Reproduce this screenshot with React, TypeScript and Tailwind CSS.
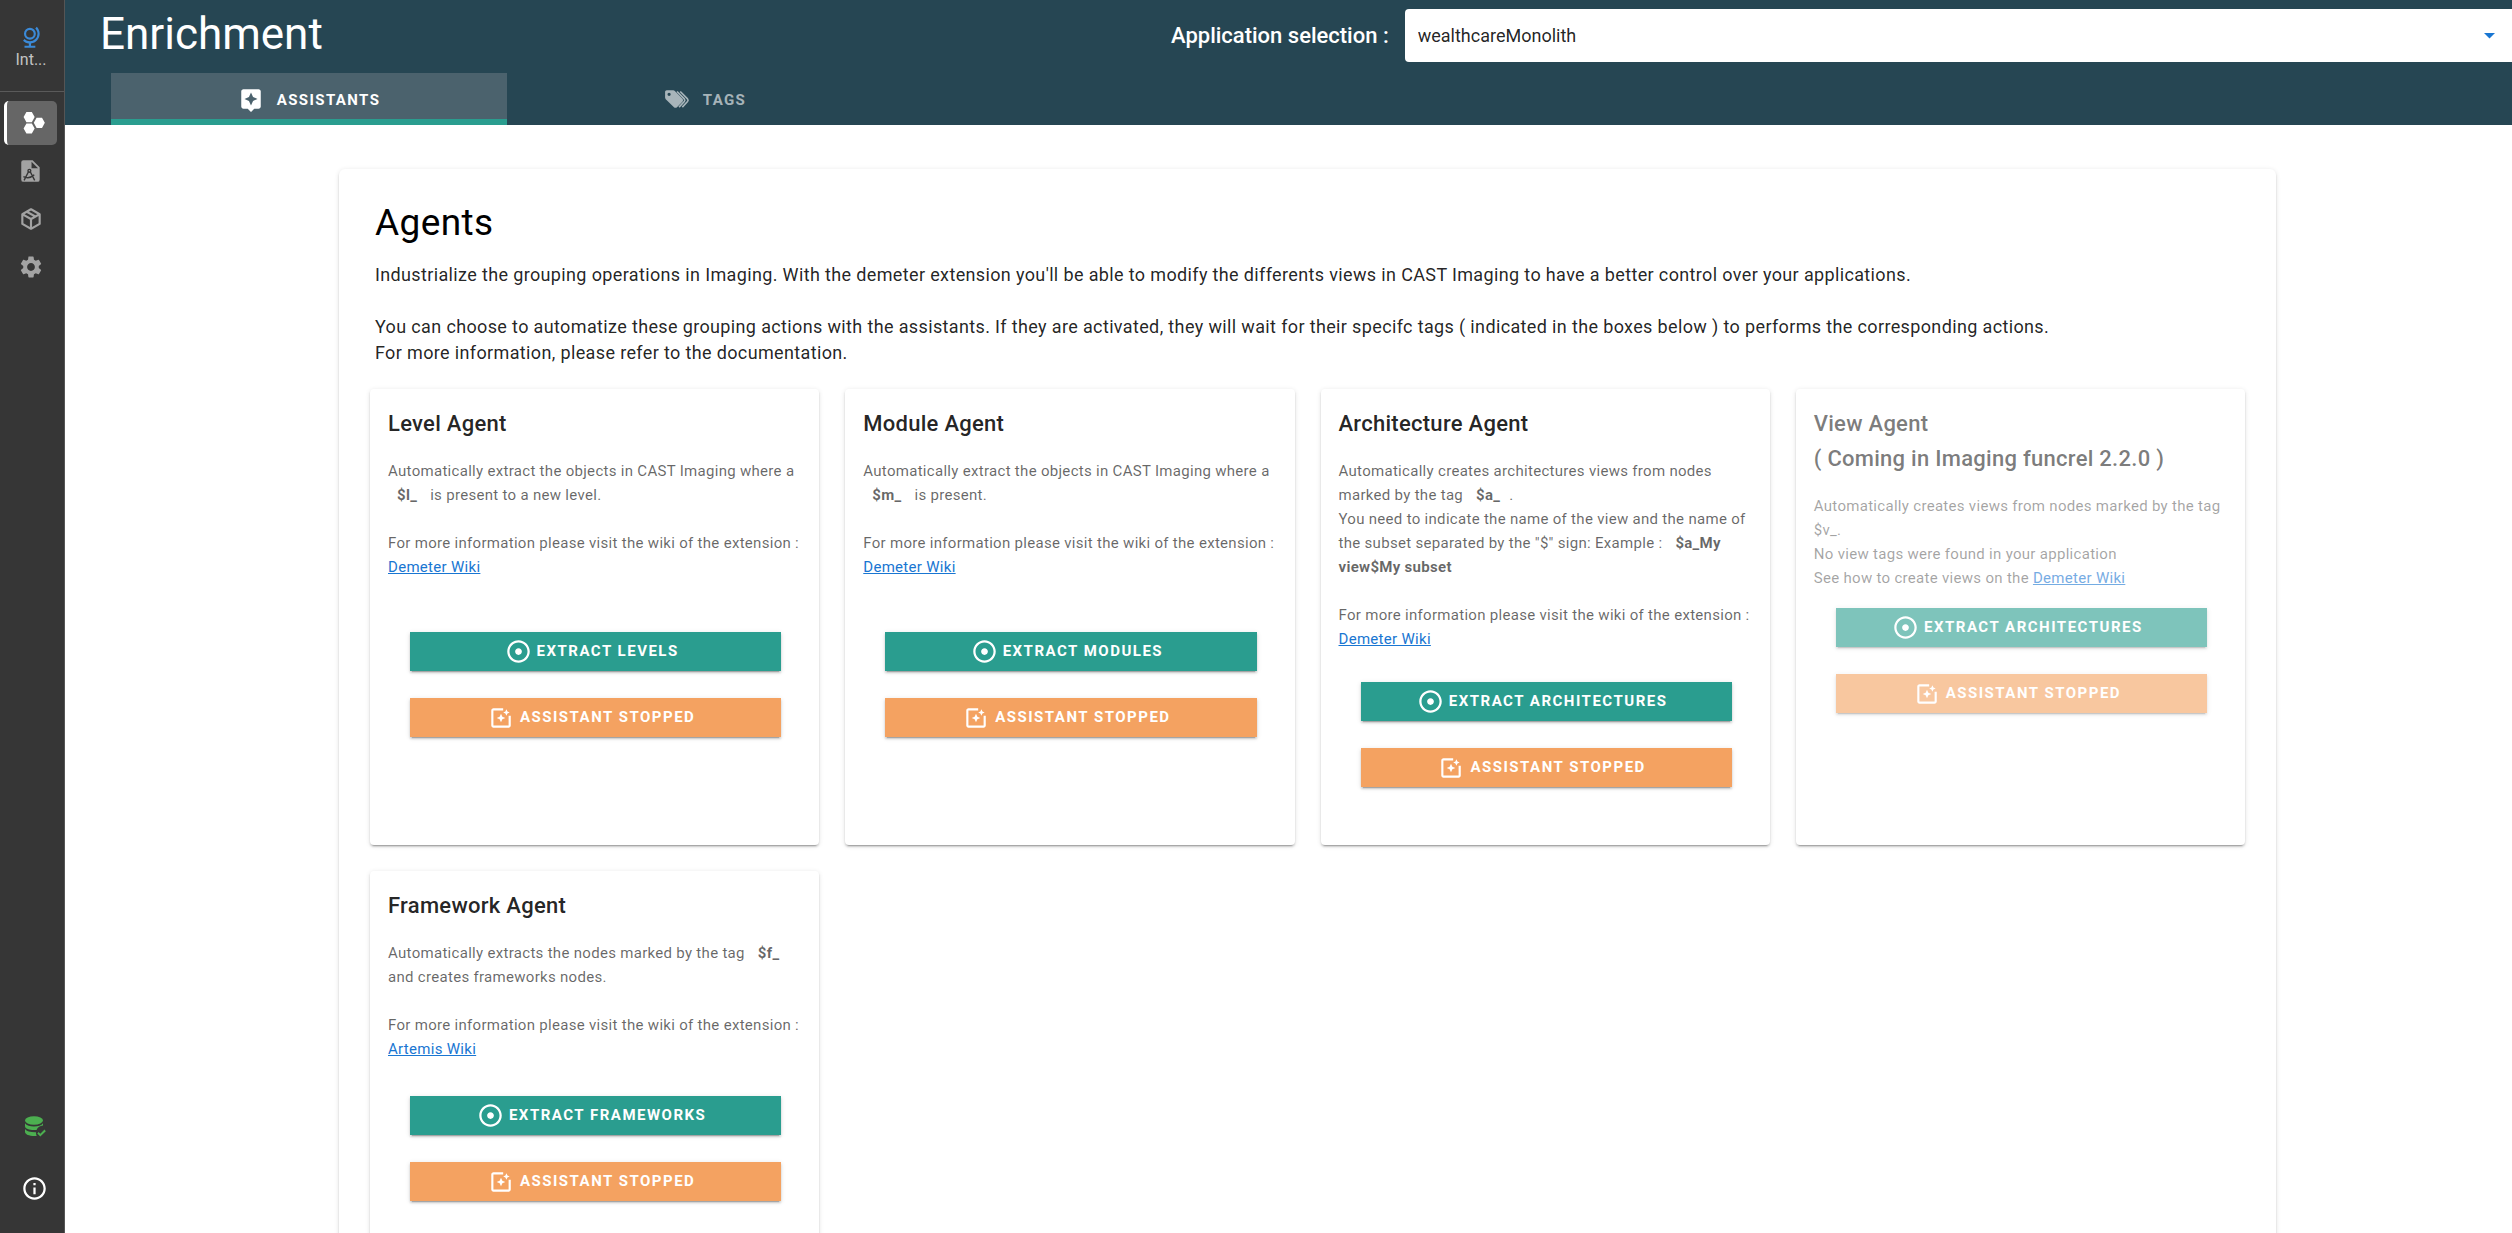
import type { ReactNode } from "react";
import { MdAdjust, MdAssistant, MdInfoOutline, MdPhotoFilter, MdSettings } from "react-icons/md";

function Svg({ children, className }: { children: ReactNode; className?: string }) {
  return (
    <svg viewBox="0 0 24 24" fill="currentColor" aria-hidden="true" className={className ?? "size-[26px]"}>
      {children}
    </svg>
  );
}

const GlobeIcon = () => (
  <Svg>
    <path d="M17.36,2.64L15.95,4.06C17.26,5.37 18,7.14 18,9A7,7 0 0,1 11,16C9.15,16 7.37,15.26 6.06,13.95L4.64,15.36C6.08,16.8 7.97,17.71 10,17.93V20H6V22H16V20H12V17.94C16.55,17.43 20,13.58 20,9C20,6.62 19.05,4.33 17.36,2.64M11,3.5A5.5,5.5 0 0,0 5.5,9A5.5,5.5 0 0,0 11,14.5A5.5,5.5 0 0,0 16.5,9A5.5,5.5 0 0,0 11,3.5M11,5.5C12.94,5.5 14.5,7.07 14.5,9A3.5,3.5 0 0,1 11,12.5A3.5,3.5 0 0,1 7.5,9A3.5,3.5 0 0,1 11,5.5Z" />
  </Svg>
);

const HexagonsIcon = () => (
  <Svg>
    <path d="M5 1.8h5l2.6 4.7L10 11.2H5L2.4 6.5zM5 12.4h5l2.6 4.7L10 21.8H5L2.4 17.1zM14.4 7.1h5L22 11.8l-2.6 4.7h-5l-2.6-4.7z" />
  </Svg>
);

const CadFileIcon = () => (
  <Svg>
    <path
      fillRule="evenodd"
      d="M5 2h8.500l6.500 6.500V20a2 2 0 0 1-2 2H5a2 2 0 0 1-2-2V4a2 2 0 0 1 2-2zM12.500 3.500V9.500H18.500z"
    />
    <g fill="none" stroke="#363636" strokeWidth="1.300">
      <path d="M9.800 12.500L5.600 20.600M11.200 12.500L15.400 20.600M5 17.200q5.500 2.600 10-1.700" />
      <circle cx="10.500" cy="11.800" r="1.300" />
    </g>
  </Svg>
);

const PackageIcon = () => (
  <Svg>
    <path d="M21,16.5C21,16.88 20.79,17.21 20.47,17.38L12.57,21.82C12.41,21.94 12.21,22 12,22C11.79,22 11.59,21.94 11.43,21.82L3.53,17.38C3.21,17.21 3,16.88 3,16.5V7.5C3,7.12 3.21,6.79 3.53,6.62L11.43,2.18C11.59,2.06 11.79,2 12,2C12.21,2 12.41,2.06 12.57,2.18L20.47,6.62C20.79,6.79 21,7.12 21,7.5V16.5M12,4.15L10.11,5.22L16,8.61L17.96,7.5L12,4.15M6.04,7.5L12,10.85L13.96,9.75L8.08,6.35L6.04,7.5M5,15.91L11,19.29V12.58L5,9.21V15.91M19,15.91V9.21L13,12.58V19.29L19,15.91Z" />
  </Svg>
);

const DatabaseCheckIcon = () => (
  <Svg className="size-[24px]">
    <ellipse cx="11" cy="5.500" rx="9" ry="4.200" />
    <path d="M2 8.200c1.500 2.400 5 3.300 9 3.300s7.500-.9 9-3.300v2.300c-2.800.3-5.600 1.900-6.500 4.400-5.300.7-11.500-.8-11.500-3.700z" />
    <path d="M2 14c1.500 2.300 5.500 3.300 11 3.200-.1 1.300.2 2.500.7 3.700C7.500 21.500 2 19.700 2 17z" />
    <path d="M17.300 21.500l-3-3.100 1.300-1.300 1.700 1.700 4.200-4.200 1.300 1.600z" />
  </Svg>
);

const TagsIcon = () => (
  <Svg>
    <path
      fillRule="evenodd"
      d="M2.500 3H8.500c.6 0 1.100.2 1.500.6l7 7.200c.8.800.8 2 0 2.800l-5 5c-.8.800-2 .8-2.800 0L1.600 11.200C1.200 10.800 1 10.200 1 9.700V4.500C1 3.700 1.700 3 2.500 3zM4.700 5.200a1.500 1.500 0 1 0 0 3 1.500 1.500 0 0 0 0-3z"
    />
    <path
      d="M12 4.200l6.700 6.800c.6.700.6 1.700 0 2.400L13.900 18.600M15 4.200l6.700 6.800c.6.700.6 1.700 0 2.400L16.900 18.600"
      fill="none"
      stroke="currentColor"
      strokeWidth="1.500"
    />
  </Svg>
);

function NavItem({ label, active, children }: { label: string; active?: boolean; children: ReactNode }) {
  return (
    <button
      type="button"
      aria-label={label}
      className={
        active
          ? "flex h-11 items-center justify-center rounded-[5px] border-l-3 border-white bg-[#666666] pl-1 text-white"
          : "flex h-11 items-center justify-center text-[#a3a3a3]"
      }
    >
      {children}
    </button>
  );
}

function Sidebar() {
  return (
    <aside className="flex w-[65px] shrink-0 flex-col border-r border-[#555555] bg-[#363636]">
      <button
        type="button"
        className="flex h-[92px] flex-col items-center border-b border-[#5a5a5a] pt-6 pr-0.5 text-[16px] leading-5 text-[#c3c3c3]"
      >
        <span className="text-[#3b8ad8]">
          <GlobeIcon />
        </span>
        <span>Int...</span>
      </button>
      <nav className="flex flex-1 flex-col gap-1 pt-[9px] pr-[7px] pl-1">
        <NavItem label="Enrichment" active>
          <HexagonsIcon />
        </NavItem>
        <NavItem label="Documents">
          <CadFileIcon />
        </NavItem>
        <NavItem label="Packages">
          <PackageIcon />
        </NavItem>
        <NavItem label="Settings">
          <MdSettings className="size-[26px]" />
        </NavItem>
      </nav>
      <div className="flex flex-col items-center gap-9 pb-[31px] pl-[5px]">
        <button type="button" aria-label="Database status" className="text-[#4caf50]">
          <DatabaseCheckIcon />
        </button>
        <button type="button" aria-label="Information" className="text-white">
          <MdInfoOutline className="size-[27px]" />
        </button>
      </div>
    </aside>
  );
}

function Header() {
  return (
    <header className="flex h-[125px] flex-col justify-between bg-[#264653] text-white">
      <div className="flex items-start">
        <h1 className="flex-1 pl-[35px] pt-[5px] text-[44px] leading-[58px]">Enrichment</h1>
        <div className="flex w-[1341px] max-w-2/3 items-center gap-4 pt-[9px]">
          <label htmlFor="application" className="shrink-0 text-[22px] font-medium">
            Application selection :
          </label>
          <div className="relative flex-1">
            <select
              id="application"
              defaultValue="wealthcareMonolith"
              className="h-[53px] w-full appearance-none rounded-l-[4px] bg-white pl-[13px] text-[18px] text-black/87"
            >
              <option>wealthcareMonolith</option>
            </select>
            <svg
              viewBox="0 0 10 5"
              aria-hidden="true"
              className="pointer-events-none absolute top-6 right-[17px] w-[11px] fill-[#1976d2]"
            >
              <path d="M0 0h10L5 5z" />
            </svg>
          </div>
        </div>
      </div>
      <div role="tablist" className="flex pl-[46px] text-[15px] font-bold tracking-[1.4px]">
        <button
          type="button"
          role="tab"
          aria-selected="true"
          className="flex h-[52px] w-[396px] items-center justify-center gap-[13px] border-b-6 border-[#2a9d8f] bg-[#4b626d] pt-2"
        >
          <MdAssistant className="size-[26px]" />
          ASSISTANTS
        </button>
        <button
          type="button"
          role="tab"
          aria-selected="false"
          className="flex h-[52px] w-[396px] items-center justify-center gap-[13px] pt-0.5 text-white/60"
        >
          <TagsIcon />
          TAGS
        </button>
      </div>
    </header>
  );
}

type Agent = {
  title: ReactNode;
  body: ReactNode;
  action: string;
  spacing: string;
  disabled?: boolean;
};

function Tag({ children }: { children: ReactNode }) {
  return <strong className="px-[9px] font-bold">{children}</strong>;
}

function WikiLink({ children }: { children: ReactNode }) {
  return (
    <a href="#wiki" className="text-[#1976d2] underline">
      {children}
    </a>
  );
}

function MoreInfo({ wiki }: { wiki: string }) {
  return (
    <>
      <br />
      <br />
      For more information please visit the wiki of the extension :
      <br />
      <WikiLink>{wiki}</WikiLink>
    </>
  );
}

const agents: Agent[] = [
  {
    title: "Level Agent",
    body: (
      <>
        Automatically extract the objects in CAST Imaging where a <Tag>$l_</Tag> is present to a new level.
        <MoreInfo wiki="Demeter Wiki" />
      </>
    ),
    action: "EXTRACT LEVELS",
    spacing: "pt-[53px]",
  },
  {
    title: "Module Agent",
    body: (
      <>
        Automatically extract the objects in CAST Imaging where a <Tag>$m_</Tag> is present.
        <MoreInfo wiki="Demeter Wiki" />
      </>
    ),
    action: "EXTRACT MODULES",
    spacing: "pt-[53px]",
  },
  {
    title: "Architecture Agent",
    body: (
      <>
        Automatically creates architectures views from nodes marked by the tag <Tag>$a_</Tag>.
        <br />
        You need to indicate the name of the view and the name of the subset separated by the "$" sign: Example :{" "}
        <Tag>$a_My view$My subset</Tag>
        <MoreInfo wiki="Demeter Wiki" />
      </>
    ),
    action: "EXTRACT ARCHITECTURES",
    spacing: "pt-[31px]",
  },
  {
    title: (
      <>
        View Agent
        <br />( Coming in Imaging funcrel 2.2.0 )
      </>
    ),
    body: (
      <>
        Automatically creates views from nodes marked by the tag $v_.
        <br />
        No view tags were found in your application
        <br />
        See how to create views on the <WikiLink>Demeter Wiki</WikiLink>
      </>
    ),
    action: "EXTRACT ARCHITECTURES",
    spacing: "pt-[18px]",
    disabled: true,
  },
  {
    title: "Framework Agent",
    body: (
      <>
        Automatically extracts the nodes marked by the tag <Tag>$f_</Tag> and creates frameworks nodes.
        <MoreInfo wiki="Artemis Wiki" />
      </>
    ),
    action: "EXTRACT FRAMEWORKS",
    spacing: "pt-[35px]",
  },
];

const buttonBase =
  "flex h-[39px] items-center justify-center pr-2 text-[15px] font-bold tracking-[1.5px] text-white shadow-[0_3px_1px_-2px_rgba(0,0,0,0.2),0_2px_2px_0_rgba(0,0,0,0.14),0_1px_5px_0_rgba(0,0,0,0.12)]";

function AgentCard({ agent }: { agent: Agent }) {
  const fade = agent.disabled ? "opacity-60" : "";
  return (
    <article className="min-h-[456px] rounded-[4px] bg-white pt-[17px] pr-4 pl-[18px] shadow-[0_3px_1px_-2px_rgba(0,0,0,0.2),0_2px_2px_0_rgba(0,0,0,0.14),0_1px_5px_0_rgba(0,0,0,0.12)]">
      <div className={fade}>
        <h3 className="text-[22px] leading-[35px] font-medium tracking-[0.0125em] text-black/87">{agent.title}</h3>
        <p className="pt-[18px] text-[15px] leading-6 tracking-[0.02em] text-black/60">{agent.body}</p>
        <div className={`flex flex-col gap-[27px] px-[22px] ${agent.spacing}`}>
          <button type="button" disabled={agent.disabled} className={`${buttonBase} gap-[5px] bg-[#2a9d8f]`}>
            <MdAdjust className="size-[27px]" />
            {agent.action}
          </button>
          <button type="button" disabled={agent.disabled} className={`${buttonBase} gap-1.5 bg-[#f4a261]`}>
            <MdPhotoFilter className="size-[26px]" />
            ASSISTANT STOPPED
          </button>
        </div>
      </div>
    </article>
  );
}

export default function App() {
  return (
    <div className="flex h-screen overflow-hidden bg-white font-['Roboto',sans-serif]">
      <Sidebar />
      <div className="flex min-w-0 flex-1 flex-col">
        <Header />
        <main className="flex-1 overflow-hidden pt-11 pr-[236px] pl-[274px]">
          <section className="rounded-[6px] bg-white px-[31px] pt-8 pb-8 shadow-[0_3px_1px_-2px_rgba(0,0,0,0.2),0_2px_2px_0_rgba(0,0,0,0.14),0_1px_5px_0_rgba(0,0,0,0.12)]">
            <div className="px-[5px]">
              <h2 className="text-[37px] leading-[44px] tracking-[0.01em] text-black">Agents</h2>
              <p className="pt-[17px] text-[18px] leading-[26px] tracking-[0.02em] text-black/87">
                Industrialize the grouping operations in Imaging. With the demeter extension you'll be able to modify the
                differents views in CAST Imaging to have a better control over your applications.
                <br />
                <br />
                You can choose to automatize these grouping actions with the assistants. If they are activated, they will
                wait for their specifc tags ( indicated in the boxes below ) to performs the corresponding actions.
                <br />
                For more information, please refer to the documentation.
              </p>
            </div>
            <div className="grid grid-cols-4 gap-[26px] pt-[23px]">
              {agents.map((agent, index) => (
                <AgentCard key={index} agent={agent} />
              ))}
            </div>
          </section>
        </main>
      </div>
    </div>
  );
}
